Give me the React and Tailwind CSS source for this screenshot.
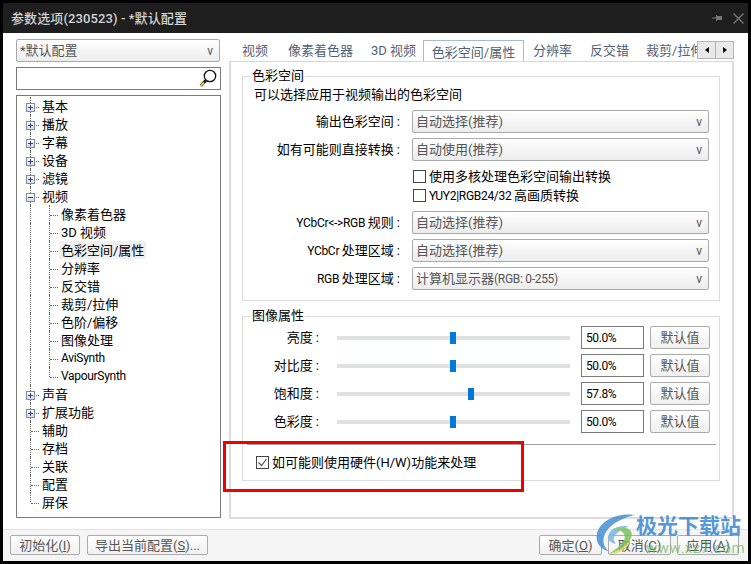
import React from "react";

const treeRows = [
  { label: "基本", box: "+" },
  { label: "播放", box: "+" },
  { label: "字幕", box: "+" },
  { label: "设备", box: "+" },
  { label: "滤镜", box: "+" },
  { label: "视频", box: "-" },
  { label: "像素着色器", child: true },
  { label: "3D 视频", child: true },
  { label: "色彩空间/属性", child: true, selected: true },
  { label: "分辨率", child: true },
  { label: "反交错", child: true },
  { label: "裁剪/拉伸", child: true },
  { label: "色阶/偏移", child: true },
  { label: "图像处理", child: true },
  { label: "AviSynth", child: true, latin: true },
  { label: "VapourSynth", child: true, lastChild: true, latin: true },
  { label: "声音", box: "+" },
  { label: "扩展功能", box: "+" },
  { label: "辅助" },
  { label: "存档" },
  { label: "关联" },
  { label: "配置" },
  { label: "屏保", last: true },
];

const sliders = [
  { label: "亮度", value: "50.0%", thumb: "ml-[113px]" },
  { label: "对比度", value: "50.0%", thumb: "ml-[113px]" },
  { label: "饱和度", value: "57.8%", thumb: "ml-[131px]" },
  { label: "色彩度", value: "50.0%", thumb: "ml-[113px]" },
];

// latin text runs narrower than the cjk next to it
const L = ({ children }) => <span className="text-[12px] tracking-[-0.3px]">{children}</span>;

// little win32 style combo box
const Combo = ({ text, className }) => (
  <div
    className={`flex items-center justify-between rounded-[2px] border border-[#a9a9a9] bg-gradient-to-b from-white to-[#ececec] pl-[3px] pr-[6px] text-[#555] ${className}`}
  >
    <span>{text}</span>
    <span className="text-[12px] text-[#555]">v</span>
  </div>
);

const Btn = ({ children, className }) => (
  <div
    className={`flex items-center justify-center rounded-[2px] border border-[#ababab] bg-gradient-to-b from-white to-[#f0f0f0] text-[#555] ${className}`}
  >
    {children}
  </div>
);

const Check = ({ checked }) => (
  <span className="flex h-[13px] w-[13px] shrink-0 items-center justify-center border border-[#444] bg-white">
    {checked && (
      <svg width="11" height="11" viewBox="0 0 11 11">
        <path d="M1.5 5.5 L4.5 8.5 L9.5 2" fill="none" stroke="#555" strokeWidth="1.2" />
      </svg>
    )}
  </span>
);

const Label = ({ children, className }) => (
  <span className={`text-right whitespace-nowrap ${className}`}>
    {children}
    <span className="ml-[3px]">:</span>
  </span>
);

const TreeRow = ({ row }) => (
  <div className="relative h-[18px] text-black">
    {/* dotted lines */}
    <span
      className={`absolute left-[13px] top-0 w-0 border-l border-dotted border-[#666] ${row.last ? "h-[9px]" : "h-[18px]"}`}
    />
    {!row.child && (
      <span className="absolute left-[14px] top-[10px] h-0 w-[8px] border-t border-dotted border-[#666]" />
    )}
    {row.child && (
      <>
        <span
          className={`absolute left-[32px] top-0 w-0 border-l border-dotted border-[#666] ${row.lastChild ? "h-[10px]" : "h-[18px]"}`}
        />
        <span className="absolute left-[33px] top-[10px] h-0 w-[8px] border-t border-dotted border-[#666]" />
      </>
    )}
    {row.box && (
      <span className="absolute left-[9px] top-[6px] flex h-[9px] w-[9px] items-center justify-center border border-[#7d8ba3] bg-gradient-to-b from-white to-[#d9dde5]">
        <span className="absolute h-px w-[5px] bg-[#2a3f8f]" />
        {row.box === "+" && <span className="absolute h-[5px] w-px bg-[#2a3f8f]" />}
      </span>
    )}
    <span
      className={`absolute top-0 flex h-[18px] items-center whitespace-nowrap ${row.child ? "left-[42px] pl-[2px] pr-[2px]" : "left-[25px]"} ${row.selected ? "bg-[#f0f0f0]" : ""}`}
    >
      {row.latin ? <L>{row.label}</L> : row.label}
    </span>
  </div>
);

const WaterMark = () => (
  <div className="absolute left-[594px] top-[513px] flex h-[46px] w-[154px] items-start">
    <svg width="46" height="44" viewBox="0 0 48 46" className="shrink-0 opacity-85">
      <path d="M42 2 C24 0 6 8 3 22 C1 31 7 38 15 40 C9 34 8 26 13 19 C19 10 31 5 42 2 Z" fill="#4a90d2" />
      <path d="M36 14 C26 12 16 17 15 24 C14 29 19 32 23 32 C20 29 20 25 23 22 C27 18 31 16 36 14 Z" fill="#79b5e4" />
      <path d="M19 17 C30 12 42 16 39 25 C37 33 26 40 15 43 C26 36 33 30 32 24 C31 19 26 17 19 17 Z" fill="#7cc25d" />
      <path d="M15 43 C24 40 33 36 38 28 C37 36 26 44 15 43 Z" fill="#e3da5c" />
    </svg>
    <div className="ml-[-4px] flex flex-col items-start">
      <span className="text-[21px] leading-[26px] font-bold whitespace-nowrap text-[#3f8ad4]/90">极光下载站</span>
      <span className="mt-[2px] ml-[10px] text-[15px] leading-[14px] tracking-[0.5px] whitespace-nowrap text-[#6db657]/70">
        www.xz7.com
      </span>
    </div>
  </div>
);

const App = () => {
  return (
    <div className="relative flex h-[564px] w-[751px] flex-col overflow-hidden bg-black p-[3px] font-['Roboto','Noto_Sans_CJK_SC',sans-serif] text-[13px] leading-none">
      {/* Title bar */}
      <div className="flex h-[30px] shrink-0 items-center justify-between bg-[#1e1e1e] pl-[8px] pr-[3px]">
        <span className="font-medium tracking-[0.1px] text-[#d4d4d4]">参数选项(230523) - *默认配置</span>
        <div className="flex items-center gap-[9px]">
          <svg width="11" height="10" viewBox="0 0 11 10">
            <path d="M0 4.5 H4 V5.5 H0 Z M4 2 H5 V3 H10 V7 H5 V8 H4 Z" fill="#767676" />
          </svg>
          <svg width="13" height="13" viewBox="0 0 13 13">
            <path d="M1.5 1.5 L11.5 11.5 M11.5 1.5 L1.5 11.5" stroke="#767676" strokeWidth="1.4" />
          </svg>
        </div>
      </div>

      <div className="flex min-h-0 flex-1 flex-col bg-white">
        <div className="flex h-[496px] shrink-0">
          {/* Left column */}
          <div className="ml-[13px] flex w-[205px] shrink-0 flex-col pt-[6px]">
            <Combo text="*默认配置" className="mr-px h-[23px]" />
            <div className="mt-[5px] flex h-[23px] items-center justify-end border border-[#7a7a7a] pr-[3px]">
              <svg width="18" height="19" viewBox="0 0 18 19">
                <circle cx="11" cy="7" r="5.7" fill="white" stroke="#111" strokeWidth="1.3" />
                <path d="M6.8 11.5 L1.8 16.8" stroke="#111" strokeWidth="3" />
                <path d="M5 13.5 L1.8 16.8" stroke="#f0d020" strokeWidth="2" />
              </svg>
            </div>
            <div className="mt-[5px] h-[423px] border border-[#7a7a7a] pt-[1px]">
              {treeRows.map((row) => (
                <TreeRow key={row.label} row={row} />
              ))}
            </div>
          </div>

          {/* Right column */}
          <div className="ml-[8px] flex w-[505px] shrink-0 flex-col pt-[7px]">
            {/* Tabs */}
            <div className="relative flex h-[21px] shrink-0 overflow-hidden text-[#4f5f78]">
              <span className="ml-[13px] pt-[4px] whitespace-nowrap">视频</span>
              <span className="ml-[20px] pt-[4px] whitespace-nowrap">像素着色器</span>
              <span className="ml-[18px] w-[43px] pt-[4px] whitespace-nowrap">3D 视频</span>
              <span className="ml-[9px] h-[21px] w-[101px] shrink-0 border border-b-0 border-[#a9b8d4] bg-white pt-[5px] text-center whitespace-nowrap">
                色彩空间/属性
              </span>
              <span className="ml-[9px] pt-[4px] whitespace-nowrap">分辨率</span>
              <span className="ml-[18px] pt-[4px] whitespace-nowrap">反交错</span>
              <span className="ml-[17px] pt-[4px] whitespace-nowrap">裁剪/拉伸</span>
              <div className="absolute left-[468px] top-[1px] flex h-[18px] w-[37px] border border-[#b5b5b5] bg-[#e9e9e9]">
                <span className="flex flex-1 items-center justify-center border-r border-[#b5b5b5]">
                  <span className="border-y-[3.5px] border-r-[4px] border-y-transparent border-r-black" />
                </span>
                <span className="flex flex-1 items-center justify-center">
                  <span className="border-y-[3.5px] border-l-[4px] border-y-transparent border-l-black" />
                </span>
              </div>
            </div>

            {/* Panel */}
            <div className="flex h-[458px] flex-col border-x-2 border-b-2 border-t border-[#dcdcdc] border-t-[#d0d7e5] pl-[11px] pr-[12px] text-black">
              {/* Colorspace group */}
              <div className="relative mt-[14px] h-[225px] border border-[#dcdcdc]">
                <span className="absolute left-[8px] top-[-8px] bg-white px-[1px]">色彩空间</span>
                <div className="pl-[11px] pt-[11px]">可以选择应用于视频输出的色彩空间</div>
                <div className="mt-[9px] flex flex-col">
                  <div className="flex h-[23px] items-center">
                    <Label className="w-[157px]">输出色彩空间</Label>
                    <Combo text="自动选择(推荐)" className="ml-[12px] h-[23px] w-[297px]" />
                  </div>
                  <div className="mt-[5px] flex h-[23px] items-center">
                    <Label className="w-[157px]">如有可能则直接转换</Label>
                    <Combo text="自动使用(推荐)" className="ml-[12px] h-[23px] w-[297px]" />
                  </div>
                  <div className="mt-[8px] ml-[170px] flex h-[14px] items-center gap-[3px]">
                    <Check />
                    <span className="whitespace-nowrap">使用多核处理色彩空间输出转换</span>
                  </div>
                  <div className="mt-[5px] ml-[170px] flex h-[14px] items-center gap-[3px]">
                    <Check />
                    <span className="whitespace-nowrap">
                      <L>YUY2|RGB24/32 </L>高画质转换
                    </span>
                  </div>
                  <div className="mt-[9px] flex h-[23px] items-center">
                    <Label className="w-[157px]">
                      <L>YCbCr&lt;-&gt;RGB </L>规则
                    </Label>
                    <Combo text="自动选择(推荐)" className="ml-[12px] h-[23px] w-[297px]" />
                  </div>
                  <div className="mt-[5px] flex h-[23px] items-center">
                    <Label className="w-[157px]">
                      <L>YCbCr </L>处理区域
                    </Label>
                    <Combo text="自动选择(推荐)" className="ml-[12px] h-[23px] w-[297px]" />
                  </div>
                  <div className="mt-[5px] flex h-[23px] items-center">
                    <Label className="w-[157px]">
                      <L>RGB </L>处理区域
                    </Label>
                    <Combo
                      text={
                        <>
                          计算机显示器<L>(RGB: 0-255)</L>
                        </>
                      }
                      className="ml-[12px] h-[23px] w-[297px]"
                    />
                  </div>
                </div>
              </div>

              {/* Picture group */}
              <div className="relative mt-[15px] h-[165px] border border-[#dcdcdc]">
                <span className="absolute left-[8px] top-[-8px] bg-white px-[1px]">图像属性</span>
                <div className="flex flex-col gap-[5px] pt-[9px]">
                  {sliders.map((s) => (
                    <div key={s.label} className="flex h-[23px] items-center">
                      <Label className="w-[76px]">{s.label}</Label>
                      <div className="ml-[18px] flex h-[12px] w-[233px] items-center">
                        <div className="relative h-[4px] w-full bg-[#dfe1e1]">
                          <span className={`absolute top-[-4px] h-[12px] w-[6px] bg-[#0078d7] ${s.thumb}`} />
                        </div>
                      </div>
                      <div className="ml-[11px] flex h-[23px] w-[63px] items-center border border-[#7a7a7a] pl-[4px] text-[12px] tracking-[-0.4px]">
                        {s.value}
                      </div>
                      <Btn className="ml-[6px] h-[23px] w-[60px]">默认值</Btn>
                    </div>
                  ))}
                </div>
                <div className="ml-[4px] mr-[3px] mt-[11px] border-t border-[#a0a0a0]" />
                <div className="ml-[13px] mt-[11px] flex items-center gap-[3px]">
                  <Check checked />
                  <span className="whitespace-nowrap">如可能则使用硬件(H/W)功能来处理</span>
                </div>
              </div>
            </div>
          </div>
        </div>

        {/* Footer */}
        <div className="flex h-[32px] shrink-0 items-start justify-between border-t border-[#e3e3e3] bg-[#f5f5f5] pl-[7px] pr-[9px] pt-[5px]">
          <div className="flex gap-[7px]">
            <Btn className="h-[20px] w-[70px]">
              <span>
                初始化(<span className="underline">I</span>)
              </span>
            </Btn>
            <Btn className="h-[20px] w-[121px]">
              <span>
                导出当前配置(<span className="underline">S</span>)...
              </span>
            </Btn>
          </div>
          <div className="flex gap-[6px]">
            <Btn className="h-[20px] w-[63px]">
              <span>
                确定(<span className="underline">O</span>)
              </span>
            </Btn>
            <Btn className="h-[20px] w-[63px]">
              <span>
                取消(<span className="underline">C</span>)
              </span>
            </Btn>
            <Btn className="h-[20px] w-[62px]">
              <span>
                应用(<span className="underline">A</span>)
              </span>
            </Btn>
          </div>
        </div>
      </div>

      {/* Screenshot annotation */}
      <div className="absolute left-[223px] top-[441px] h-[51px] w-[301px] border-[3px] border-[#f00000]" />
      <WaterMark />
    </div>
  );
};

export default App;
